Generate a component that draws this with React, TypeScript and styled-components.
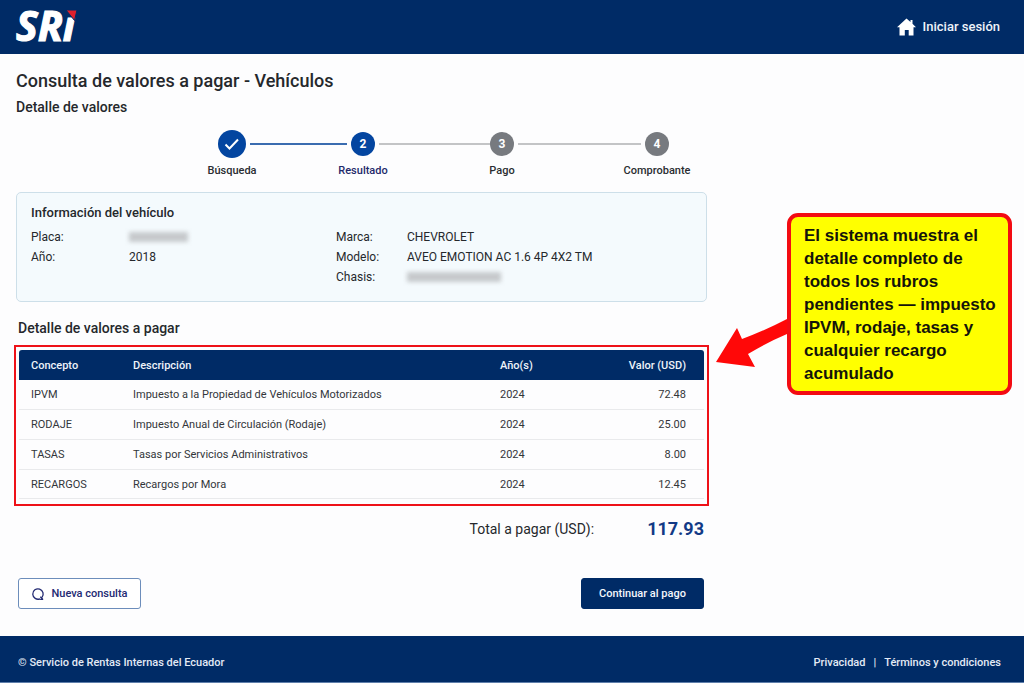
import React from "react";
import styled, { createGlobalStyle } from "styled-components";

const navy = "#002b66";
const blue = "#0345a0";

const GlobalStyle = createGlobalStyle`
  *, *::before, *::after { box-sizing: border-box; }
  body {
    margin: 0;
    background: #fdfdfe;
    color: #25282c;
    font-family: Roboto, "Liberation Sans", sans-serif;
    font-size: 12px;
  }
  h1, h2, h3, p, dl, dd, ol { margin: 0; padding: 0; }
  button { font-family: inherit; cursor: pointer; }
  a { color: inherit; text-decoration: none; }
`;

const Page = styled.div`
  display: flex;
  flex-direction: column;
  min-height: 100vh;
`;

const Header = styled.header`
  display: flex;
  align-items: center;
  justify-content: space-between;
  height: 54px;
  padding: 0 24px 0 16px;
  background: ${navy};
`;

const Logo = styled.a`
  display: flex;

  svg { overflow: visible; }
`;

const LoginLink = styled.a`
  display: flex;
  align-items: center;
  gap: 7px;
  color: #eef3fa;
  font-size: 13px;
  font-weight: 500;
  line-height: 20px;
`;

const Main = styled.main`
  display: grid;
  grid-template-columns: minmax(0, 1fr) 225px;
  gap: 80px;
  align-items: start;
  flex: 1;
  padding: 16px 12px 27px 16px;
`;

const Title = styled.h1`
  font-size: 18px;
  font-weight: 500;
  line-height: 22px;
`;

const Subtitle = styled.h2`
  margin-top: 4px;
  font-size: 14px;
  font-weight: 500;
  line-height: 22px;
`;

const Stepper = styled.ol`
  display: grid;
  grid-template-columns: 28px 105fr 24px 115fr 24px 131fr 24px;
  margin-top: 12px;
  padding: 0 38px 0 202px;
  list-style: none;
`;

const Step = styled.li`
  display: flex;
  flex-direction: column;
  align-items: center;
`;

const StepBadge = styled.span<{ $size: number; $active?: boolean }>`
  display: flex;
  align-items: center;
  justify-content: center;
  flex: none;
  width: ${(p) => p.$size}px;
  height: ${(p) => p.$size}px;
  margin: ${(p) => (28 - p.$size) / 2}px 0;
  border-radius: 50%;
  background: ${(p) => (p.$active ? blue : "#777a7f")};
  color: #fff;
  font-weight: 700;
`;

const StepLabel = styled.span<{ $current?: boolean }>`
  margin-top: 5px;
  color: ${(p) => (p.$current ? "#1f2a6b" : "#2a2d31")};
  font-size: 11px;
  font-weight: 500;
  line-height: 16px;
  white-space: nowrap;
`;

const Connector = styled.li<{ $done?: boolean; $joined?: boolean }>`
  height: 2px;
  margin: 13px ${(p) => (p.$joined ? 0 : 4)}px 0 4px;
  background: ${(p) => (p.$done ? "#3a6cb0" : "#c3c4c6")};
`;

const VehicleCard = styled.section`
  min-height: 110px;
  margin-top: 13px;
  padding: 11px 14px;
  border: 1px solid #cddfe9;
  border-radius: 5px;
  background: #f4fafd;
`;

const CardTitle = styled.h3`
  font-size: 13px;
  font-weight: 500;
  line-height: 18px;
`;

const VehicleColumns = styled.div`
  display: grid;
  grid-template-columns: 305fr 356fr;
  align-items: start;
  margin-top: 5px;
`;

const Facts = styled.dl<{ $label: number }>`
  display: grid;
  grid-template-columns: ${(p) => p.$label}px 1fr;
  grid-auto-rows: 20px;
  align-items: center;
  font-size: 12px;
`;

const Redacted = styled.span<{ $width: number }>`
  display: block;
  width: ${(p) => p.$width}px;
  height: 10px;
  background: #c6c9cc;
  filter: blur(2px);
`;

const SectionTitle = styled.h3`
  margin: 16px 2px 0;
  font-size: 14px;
  font-weight: 500;
  line-height: 20px;
`;

const Highlight = styled.section`
  margin: 7px -2px 0;
  padding: 3px 3px 5px;
  border: 2px solid #ee1118;
`;

const Table = styled.table`
  width: 100%;
  table-layout: fixed;
  border-collapse: separate;
  border-spacing: 0;
  font-size: 11px;

  th, td {
    height: 30px;
    padding: 0 18px 0 12px;
    text-align: left;
    white-space: nowrap;
  }
  th {
    background: ${navy};
    color: #eef3fa;
    font-weight: 500;
  }
  td {
    border-bottom: 1px solid #e9eaec;
    color: #33363a;
  }
  tbody tr:last-child td { height: 29px; }
  th:first-child { border-top-left-radius: 3px; }
  th:last-child { border-top-right-radius: 3px; }
  th:last-child, td:last-child { padding-left: 0; text-align: right; }
`;

const Col = styled.col<{ $width?: number }>`
  width: ${(p) => (p.$width ? `${p.$width}px` : "auto")};
`;

const Total = styled.p`
  display: flex;
  align-items: center;
  justify-content: flex-end;
  gap: 53px;
  margin: 11px 3px 0;
  font-size: 14px;
  line-height: 24px;
`;

const TotalValue = styled.strong`
  color: #123a86;
  font-size: 18px;
  font-weight: 700;
`;

const Actions = styled.div`
  display: flex;
  justify-content: space-between;
  margin: 37px 3px 0 2px;
`;

const Button = styled.button<{ $primary?: boolean }>`
  display: flex;
  align-items: center;
  justify-content: center;
  gap: 6px;
  width: 123px;
  height: 31px;
  padding: 0;
  border: 1px solid ${(p) => (p.$primary ? navy : "#6c8dbb")};
  border-radius: 3px;
  background: ${(p) => (p.$primary ? navy : "#fff")};
  color: ${(p) => (p.$primary ? "#f4f7fc" : "#232a72")};
  font-size: 11px;
  font-weight: 500;
`;

const CalloutArea = styled.aside`
  position: relative;
  margin-top: 143px;
`;

const Callout = styled.p`
  padding: 7px 0 6px 13px;
  border: 4px solid #f30b12;
  border-radius: 11px;
  background: #ffff00;
  color: #14140a;
  font-family: "Liberation Sans", Arial, sans-serif;
  font-size: 17px;
  font-weight: 700;
  line-height: 23px;
`;

const Arrow = styled.svg`
  position: absolute;
  top: 104px;
  left: -71px;
`;

const Footer = styled.footer`
  display: flex;
  align-items: center;
  justify-content: space-between;
  height: 47px;
  padding: 6px 23px 0 18px;
  border-bottom: 1px solid #5f7fab;
  background: ${navy};
  color: #e3eaf5;
  font-size: 11px;
  font-weight: 500;
`;

const FooterLinks = styled.nav`
  display: flex;
  gap: 8px;
`;

const rows = [
  ["IPVM", "Impuesto a la Propiedad de Vehículos Motorizados", "2024", "72.48"],
  ["RODAJE", "Impuesto Anual de Circulación (Rodaje)", "2024", "25.00"],
  ["TASAS", "Tasas por Servicios Administrativos", "2024", "8.00"],
  ["RECARGOS", "Recargos por Mora", "2024", "12.45"],
];

export default function App() {
  return (
    <Page>
      <GlobalStyle />
      <Header>
        <Logo href="#" aria-label="SRi">
          <svg width="72" height="54" viewBox="0 0 72 54">
            <text
              x="0"
              y="41"
              fill="#fff"
              stroke="#fff"
              strokeWidth="1.200"
              fontFamily="'Open Sans', sans-serif"
              fontStyle="italic"
              fontWeight="700"
              fontSize="41"
            >
              SRı
            </text>
            <path d="M50 10h11l-2.500 10.500z" fill="#e0202c" stroke={navy} strokeWidth="1" />
          </svg>
        </Logo>
        <LoginLink href="#">
          <svg width="19" height="18" viewBox="0 0 19 18" fill="#fff">
            <path d="M9.500 0.500L13.500 4V2h2v3.800L19 9.200h-2.500V17.500h-4.800V12H7.800v5.500H2.500V9.200H0z" />
          </svg>
          Iniciar sesión
        </LoginLink>
      </Header>

      <Main>
        <div>
          <Title>Consulta de valores a pagar - Vehículos</Title>
          <Subtitle>Detalle de valores</Subtitle>

          <Stepper>
            <Step>
              <StepBadge $size={28} $active>
                <svg width="16" height="12" viewBox="0 0 16 12" fill="none" stroke="#fff" strokeWidth="2">
                  <path d="M1.500 6.500l4 4L14 1.500" />
                </svg>
              </StepBadge>
              <StepLabel>Búsqueda</StepLabel>
            </Step>
            <Connector $done aria-hidden="true" />
            <Step aria-current="step">
              <StepBadge $size={24} $active>2</StepBadge>
              <StepLabel $current>Resultado</StepLabel>
            </Step>
            <Connector $joined aria-hidden="true" />
            <Step>
              <StepBadge $size={24}>3</StepBadge>
              <StepLabel>Pago</StepLabel>
            </Step>
            <Connector aria-hidden="true" />
            <Step>
              <StepBadge $size={24}>4</StepBadge>
              <StepLabel>Comprobante</StepLabel>
            </Step>
          </Stepper>

          <VehicleCard>
            <CardTitle>Información del vehículo</CardTitle>
            <VehicleColumns>
              <Facts $label={98}>
                <dt>Placa:</dt>
                <dd><Redacted $width={59} /></dd>
                <dt>Año:</dt>
                <dd>2018</dd>
              </Facts>
              <Facts $label={71}>
                <dt>Marca:</dt>
                <dd>CHEVROLET</dd>
                <dt>Modelo:</dt>
                <dd>AVEO EMOTION AC 1.6 4P 4X2 TM</dd>
                <dt>Chasis:</dt>
                <dd><Redacted $width={94} /></dd>
              </Facts>
            </VehicleColumns>
          </VehicleCard>

          <SectionTitle>Detalle de valores a pagar</SectionTitle>
          <Highlight>
            <Table>
              <colgroup>
                <Col $width={102} />
                <Col />
                <Col $width={103} />
                <Col $width={113} />
              </colgroup>
              <thead>
                <tr>
                  <th scope="col">Concepto</th>
                  <th scope="col">Descripción</th>
                  <th scope="col">Año(s)</th>
                  <th scope="col">Valor (USD)</th>
                </tr>
              </thead>
              <tbody>
                {rows.map((row) => (
                  <tr key={row[0]}>
                    {row.map((cell, i) => (
                      <td key={i}>{cell}</td>
                    ))}
                  </tr>
                ))}
              </tbody>
            </Table>
          </Highlight>

          <Total>
            Total a pagar (USD): <TotalValue>117.93</TotalValue>
          </Total>

          <Actions>
            <Button type="button">
              <svg width="14" height="14" viewBox="0 0 14 14" fill="none" stroke="#232a72" strokeWidth="1.300">
                <path d="M9 11.800A5.200 5.200 0 1 1 11 10.300M9.300 9.800l2.500 2.400M9.200 12.300h3" />
              </svg>
              Nueva consulta
            </Button>
            <Button type="button" $primary>Continuar al pago</Button>
          </Actions>
        </div>

        <CalloutArea>
          <Callout>
            El sistema muestra el detalle completo de todos los rubros pendientes — impuesto IPVM, rodaje, tasas y
            cualquier recargo acumulado
          </Callout>
          <Arrow width="75" height="52" viewBox="0 0 75 52" fill="#ff0808">
            <path d="M0 45L21 11L26 22Q48 14 71 2V17Q52 25 32 37L39 50Z" />
          </Arrow>
        </CalloutArea>
      </Main>

      <Footer>
        <span>© Servicio de Rentas Internas del Ecuador</span>
        <FooterLinks>
          <a href="#">Privacidad</a>
          <span aria-hidden="true">|</span>
          <a href="#">Términos y condiciones</a>
        </FooterLinks>
      </Footer>
    </Page>
  );
}
